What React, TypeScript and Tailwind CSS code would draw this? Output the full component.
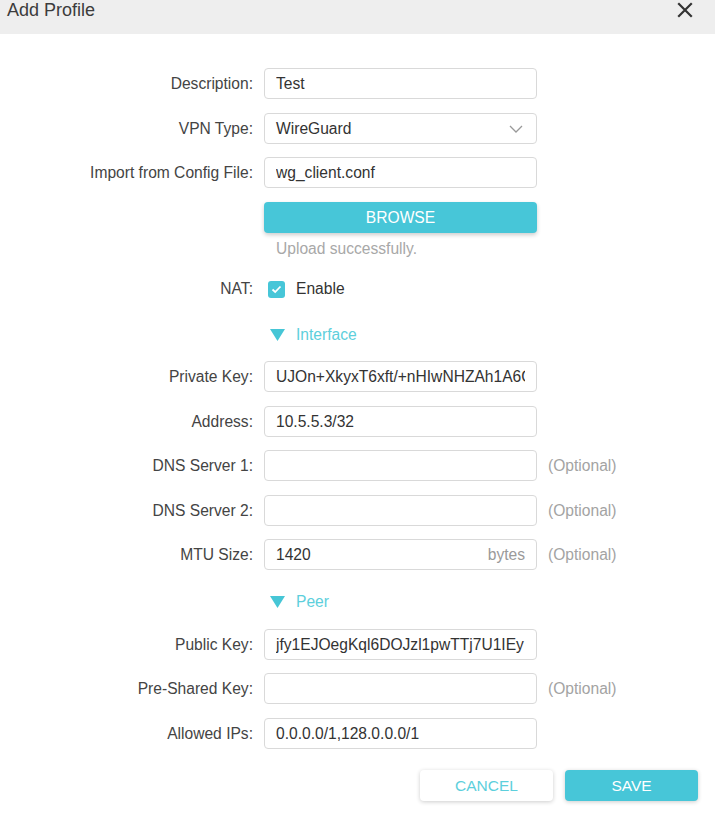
import React from "react";

const font = { fontFamily: '"Liberation Sans", Arial, sans-serif' };

function Label({ children }: { children: React.ReactNode }) {
  return <div className="w-[253px] shrink-0 text-right text-[15.6px] text-[#444] whitespace-nowrap">{children}</div>;
}

function Field({
  label,
  value,
  optional,
  suffix,
  mt,
}: {
  label: string;
  value?: string;
  optional?: boolean;
  suffix?: string;
  mt: string;
}) {
  return (
    <div className={`flex items-center h-[31px] ${mt}`}>
      <Label>{label}</Label>
      <div className="ml-[11px] w-[273px] h-[31px] border border-[#d9d9d9] rounded-[4px] flex items-center pl-[11px] pr-[11px] text-[15.6px] text-[#333] overflow-hidden whitespace-nowrap">
        <span className="flex-1 overflow-hidden">{value}</span>
        {suffix && <span className="text-[#9a9a9a] ml-2">{suffix}</span>}
      </div>
      {optional && <div className="ml-[11px] text-[15.6px] text-[#a3a3a3]">(Optional)</div>}
    </div>
  );
}

function Section({ title, mt }: { title: string; mt: string }) {
  return (
    <div className={`flex items-center h-[20px] ${mt}`}>
      <div className="w-[253px] shrink-0" />
      <div className="ml-[17px] flex items-center gap-[11px]">
        <svg width="15" height="12" viewBox="0 0 15 12">
          <polygon points="0,0 15,0 7.5,12" fill="#46c6d6" />
        </svg>
        <span className="text-[15.6px] text-[#5dcfdc]">{title}</span>
      </div>
    </div>
  );
}

export default function App() {
  return (
    <div className="w-[715px] h-[816px] bg-white relative overflow-hidden" style={font}>
      <div className="h-[34px] bg-[#eeeeee] flex items-start justify-between pl-[7px] pr-[22px]">
        <div className="text-[18px] text-[#3c3c3c] leading-[20px]">Add Profile</div>
        <svg width="16" height="16" viewBox="0 0 16 16" className="mt-[2px]">
          <path d="M2 2 L14 14 M14 2 L2 14" stroke="#333" strokeWidth="2.2" strokeLinecap="square" />
        </svg>
      </div>

      <Field label="Description:" value="Test" mt="mt-[34px]" />

      <div className="flex items-center h-[31px] mt-[14px]">
        <Label>VPN Type:</Label>
        <div className="ml-[11px] w-[273px] h-[31px] border border-[#d9d9d9] rounded-[4px] flex items-center justify-between pl-[11px] pr-[13px] text-[15.6px] text-[#333]">
          <span>WireGuard</span>
          <svg width="14" height="8" viewBox="0 0 14 8">
            <path d="M1 1 L7 7 L13 1" fill="none" stroke="#999" strokeWidth="1.3" />
          </svg>
        </div>
      </div>

      <Field label="Import from Config File:" value="wg_client.conf" mt="mt-[13px]" />

      <div className="flex mt-[14px]">
        <div className="w-[253px] shrink-0" />
        <div className="ml-[11px] w-[273px] h-[31px] rounded-[4px] bg-[#47c6d8] shadow-[0_2px_4px_rgba(0,0,0,0.2)] flex items-center justify-center text-[15.6px] text-white">
          BROWSE
        </div>
      </div>

      <div className="flex items-center h-[20px] mt-[6px]">
        <div className="w-[253px] shrink-0" />
        <div className="ml-[23px] text-[15.6px] text-[#a8a8a8]">Upload successfully.</div>
      </div>

      <div className="flex items-center h-[20px] mt-[20px]">
        <Label>NAT:</Label>
        <div className="ml-[15px] flex items-center gap-[11px]">
          <div className="w-[17px] h-[17px] rounded-[3px] bg-[#47c6d8] flex items-center justify-center">
            <svg width="11" height="9" viewBox="0 0 11 9">
              <path d="M1.5 4.5 L4.2 7 L9.5 1.5" fill="none" stroke="white" strokeWidth="1.8" />
            </svg>
          </div>
          <span className="text-[15.6px] text-[#333]">Enable</span>
        </div>
      </div>

      <Section title="Interface" mt="mt-[26px]" />

      <Field label="Private Key:" value="UJOn+XkyxT6xft/+nHIwNHZAh1A6G" mt="mt-[16px]" />
      <Field label="Address:" value="10.5.5.3/32" mt="mt-[14px]" />
      <Field label="DNS Server 1:" optional mt="mt-[13px]" />
      <Field label="DNS Server 2:" optional mt="mt-[14px]" />
      <Field label="MTU Size:" value="1420" suffix="bytes" optional mt="mt-[13px]" />

      <Section title="Peer" mt="mt-[22px]" />

      <Field label="Public Key:" value="jfy1EJOegKql6DOJzl1pwTTj7U1IEy" mt="mt-[17px]" />
      <Field label="Pre-Shared Key:" optional mt="mt-[13px]" />
      <Field label="Allowed IPs:" value="0.0.0.0/1,128.0.0.0/1" mt="mt-[14px]" />

      <div className="flex justify-end gap-[12px] pr-[17px] mt-[21px]">
        <div className="w-[133px] h-[31px] rounded-[4px] bg-white shadow-[0_1px_4px_rgba(0,0,0,0.2)] flex items-center justify-center text-[15.5px] text-[#5dcfdc]">
          CANCEL
        </div>
        <div className="w-[133px] h-[31px] rounded-[4px] bg-[#47c6d8] shadow-[0_1px_4px_rgba(0,0,0,0.2)] flex items-center justify-center text-[15.5px] text-white">
          SAVE
        </div>
      </div>
    </div>
  );
}
